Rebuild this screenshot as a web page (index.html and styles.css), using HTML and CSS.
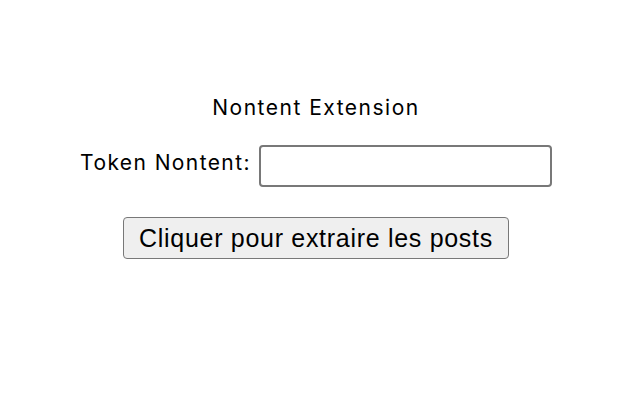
FILE: index.html
```html
<!DOCTYPE html>
<html lang="fr">
<head>
<meta charset="utf-8">
<title>Nontent Extension</title>
<link rel="stylesheet" href="styles.css">
</head>
<body>
<main class="popup">
  <h1 class="title">Nontent Extension</h1>
  <div class="row">
    <label class="label" for="token">Token Nontent:</label>
    <input class="input" id="token" type="text">
  </div>
  <button class="btn" type="button">Cliquer pour extraire les posts</button>
</main>
</body>
</html>
```
FILE: styles.css
```css
html, body {
  margin: 0;
  padding: 0;
  background: #ffffff;
}
body {
  font-family: Inter, "Liberation Sans", sans-serif;
  color: #000000;
}
.popup {
  display: flex;
  flex-direction: column;
  align-items: center;
  padding: 94px 8px 0 0;
}
.title {
  margin: 0;
  font-size: 21px;
  font-weight: 400;
  line-height: 28px;
  letter-spacing: 1.5px;
}
.row {
  display: flex;
  align-items: center;
  gap: 8px;
  margin-top: 23px;
}
.label {
  font-size: 21px;
  line-height: 28px;
  letter-spacing: 1.4px;
  margin-bottom: 7px;
}
.input {
  box-sizing: border-box;
  width: 293px;
  height: 42px;
  border: 2px solid #787878;
  border-radius: 4px;
  margin: 0;
  padding: 0 6px;
  background: #fff;
  font-size: 20px;
}
.btn {
  box-sizing: border-box;
  margin-top: 30px;
  width: 386px;
  height: 42px;
  border: 1px solid #787878;
  border-radius: 4px;
  background: #efefef;
  font-family: "Liberation Sans", Arial, sans-serif;
  font-size: 25px;
  letter-spacing: 0.7px;
  color: #000;
  padding: 0;
}
```
